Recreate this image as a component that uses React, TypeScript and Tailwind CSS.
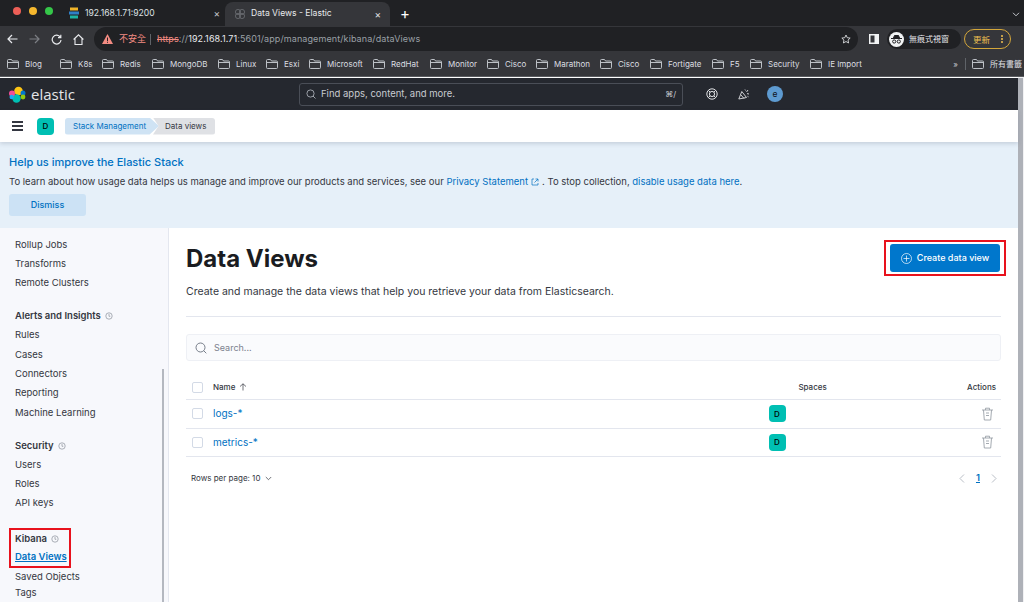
import React from "react";

const bookmarks: [string, number][] = [
  ["Blog", 53],["K8s", 42],["Redis", 50],["MongoDB", 66],["Linux", 48],["Esxi", 43],["Microsoft", 64],["RedHat", 57],["Monitor", 57],["Cisco", 49],["Marathon", 64],["Cisco", 50],["Fortigate", 62],["F5", 38],["Security", 60],["IE Import", 60],
];

function Folder() {
  return (
    <svg width="12" height="10" viewBox="0 0 12 10" fill="none" stroke="#bdc1c6" strokeWidth="1" className="shrink-0">
      <path d="M.5 8.5v-7a1 1 0 0 1 1-1h3l1 1.5h5a1 1 0 0 1 1 1v5.5a1 1 0 0 1-1 1h-9a1 1 0 0 1-1-1z" />
      <path d="M.5 3.5h11" />
    </svg>
  );
}

function Info() {
  return (
    <svg width="8" height="8" viewBox="0 0 8 8" fill="none" stroke="#8a8f99" strokeWidth=".7" className="ml-1">
      <circle cx="4" cy="4" r="3.2" />
      <path d="M4 2v2.3h1.3" />
    </svg>
  );
}

function Trash() {
  return (
    <svg width="13" height="14" viewBox="0 0 13 14" fill="none" stroke="#9aa0a8" strokeWidth=".9">
      <path d="M1 3h11M4.5 3V1.2h4V3M2.5 3l.8 10h6.4l.8-10M5 6h3M5 8.5h3" />
    </svg>
  );
}

function SpaceBadge({ className = "" }: { className?: string }) {
  return (
    <div className={`flex h-[17px] w-[17px] items-center justify-center rounded-[4px] bg-[#00bfb3] text-[8px] font-medium text-black ${className}`}>D</div>
  );
}

function Checkbox() {
  return <div className="h-[11px] w-[11px] rounded-[2px] border border-[#d3dae6] bg-white" />;
}

function SideItem({ label }: { label: string }) {
  return <div className="flex h-[19.4px] items-center text-[9.5px] text-[#343741]">{label}</div>;
}

function SideHead({ label, className = "" }: { label: string; className?: string }) {
  return (
    <div className={`flex h-[19px] items-center text-[9.5px] font-semibold text-[#343741] ${className}`}>
      {label}
      <Info />
    </div>
  );
}

export default function App() {
  return (
    <div className="flex h-[602px] w-[1024px] flex-col overflow-hidden bg-white font-['Inter',sans-serif]">
      {/* tab strip */}
      <div className="flex h-[26px] shrink-0 items-end bg-[#202124]">
        <div className="flex h-[24px] w-[65px] items-start gap-[8px] pl-[13px] pt-[5px]">
          <div className="h-[8px] w-[8px] rounded-full bg-[#ed5f57]" />
          <div className="h-[8px] w-[8px] rounded-full bg-[#f5b82e]" />
          <div className="h-[8px] w-[8px] rounded-full bg-[#35c749]" />
        </div>
        <div className="flex h-[24px] w-[160px] items-center pb-[2px] pl-[4px]">
          <svg width="10" height="12" viewBox="0 0 10 12" className="shrink-0">
            <path d="M1 0.5h8v3H1z" fill="#f0b429" />
            <path d="M0 4.5h10v3H0z" fill="#2f80c7" />
            <path d="M1 8.5h8v3H1z" fill="#1db5a5" />
          </svg>
          <span className="ml-[6px] text-[8.6px] text-[#dfe1e5]">192.168.1.71:9200</span>
          <span className="ml-auto mr-[5px] text-[10px] leading-none text-[#c4c7cc]">×</span>
        </div>
        <div className="flex h-[24px] w-[165px] items-center rounded-t-[8px] bg-[#35363a] pb-[1px] pl-[9px]">
          <svg width="12" height="12" viewBox="0 0 12 12" fill="none" stroke="#6d7075" strokeWidth=".8" className="shrink-0">
            <circle cx="4" cy="4" r="2.6" /><circle cx="8" cy="4" r="2.6" /><circle cx="4" cy="8" r="2.6" /><circle cx="8" cy="8" r="2.6" />
          </svg>
          <span className="ml-[5px] text-[8.6px] text-[#e8eaed]">Data Views - Elastic</span>
          <span className="ml-auto mr-[9px] text-[10px] leading-none text-[#e0e2e5]">×</span>
        </div>
        <div className="ml-[10px] flex h-[24px] items-center pb-[2px] text-[15px] leading-none text-white">+</div>
        <svg width="8" height="5" viewBox="0 0 8 5" fill="none" stroke="#c4c7cc" strokeWidth="1" className="ml-auto mb-[9px] mr-[4px]">
          <path d="M1 .8l3 3 3-3" />
        </svg>
      </div>
      {/* toolbar */}
      <div className="flex h-[26px] shrink-0 items-center bg-[#35363a]">
        <svg width="11" height="10" viewBox="0 0 11 10" fill="none" stroke="#e8eaed" strokeWidth="1.2" className="ml-[7px]"><path d="M10.5 5H1M5 1L1 5l4 4" /></svg>
        <svg width="11" height="10" viewBox="0 0 11 10" fill="none" stroke="#7c7f84" strokeWidth="1.2" className="ml-[11px]"><path d="M.5 5H10M6 1l4 4-4 4" /></svg>
        <svg width="11" height="11" viewBox="0 0 11 11" fill="none" stroke="#e8eaed" strokeWidth="1.2" className="ml-[11px]"><path d="M9.3 3.2A4.4 4.4 0 1 0 10 6M9.8 .8v2.8H7" /></svg>
        <svg width="11" height="11" viewBox="0 0 11 11" fill="none" stroke="#e8eaed" strokeWidth="1.1" className="ml-[11px]"><path d="M.6 5.5L5.5.8l4.9 4.7M2 4.5v6h7v-6" /></svg>
        <div className="ml-[10px] flex h-[24px] w-[764px] items-center rounded-full bg-[#202124] pl-[8px]">
          <svg width="11" height="10" viewBox="0 0 11 10" className="shrink-0"><path d="M5.5 0L11 10H0z" fill="#f28b82" /><path d="M5 3.5h1v3.4H5zM5 7.7h1v1H5z" fill="#202124" /></svg>
          <span className="ml-[6px] font-['Noto_Sans_CJK_TC','Inter',sans-serif] text-[9px] text-[#f28b82]">不安全</span>
          <div className="ml-[4px] h-[11px] w-px bg-[#5f6368]" />
          <span className="ml-[6px] text-[9px] tracking-[.1px]">
            <span className="text-[#f28b82] line-through">https</span>
            <span className="text-[#9aa0a6]">://</span>
            <span className="text-[#e8eaed]">192.168.1.71</span>
            <span className="text-[#9aa0a6]">:5601/app/management/kibana/dataViews</span>
          </span>
          <svg width="10" height="10" viewBox="0 0 24 24" fill="none" stroke="#e8eaed" strokeWidth="2" className="ml-auto mr-[7px]"><path d="M12 2.5l3 6.4 7 .9-5.100 4.800 1.300 6.900-6.200-3.400-6.200 3.400 1.300-6.900L2 9.800l7-.9z" /></svg>
        </div>
        <svg width="10" height="10" viewBox="0 0 10 10" className="ml-[11px]"><path d="M0 0h10v10H0z" fill="#f1f3f4" /><path d="M1.500 1.500h4v7h-4z" fill="#35363a" /></svg>
        <div className="ml-[8px] flex h-[20px] w-[74px] items-center rounded-full bg-[#202124] pl-[2px]">
          <div className="flex h-[15px] w-[15px] items-center justify-center rounded-full bg-[#f1f3f4]">
            <svg width="11" height="9" viewBox="0 0 11 9" fill="none" stroke="#202124" strokeWidth="1"><path d="M0 3.500h11" /><path d="M2.500 3l1-2.500h4l1 2.500z" fill="#202124" /><circle cx="3.200" cy="6.500" r="1.600" /><circle cx="7.800" cy="6.500" r="1.600" /></svg>
          </div>
          <span className="ml-[5px] font-['Noto_Sans_CJK_TC',sans-serif] text-[8px] text-[#e8eaed]">無痕式視窗</span>
        </div>
        <div className="ml-[3px] flex h-[20px] w-[47px] items-center rounded-full border border-[#d4a73a] pl-[8px]">
          <span className="font-['Noto_Sans_CJK_TC',sans-serif] text-[8.500px] text-[#f0c050]">更新</span>
          <div className="ml-auto mr-[7px] flex flex-col gap-px">
            <div className="h-[2px] w-[2px] rounded-full bg-[#f0c050]" />
            <div className="h-[2px] w-[2px] rounded-full bg-[#f0c050]" />
            <div className="h-[2px] w-[2px] rounded-full bg-[#f0c050]" />
          </div>
        </div>
      </div>
      {/* bookmarks */}
      <div className="flex h-[25px] shrink-0 items-center border-b border-[#5a5c60] bg-[#35363a] pl-[7px] pr-[2px]">
        {bookmarks.map(([name, w], i) => (
          <div key={i} style={{ width: w }} className="flex shrink-0 items-center gap-[6px] text-[8px] text-[#dcdee1]">
            <Folder />
            <span>{name}</span>
          </div>
        ))}
        <span className="ml-auto text-[8px] text-[#c4c7cc]">»</span>
        <div className="ml-[7px] mr-[6px] h-[12px] w-px bg-[#5f6368]" />
        <div className="flex items-center gap-[6px] font-['Noto_Sans_CJK_TC',sans-serif] text-[8px] text-[#dcdee1]">
          <Folder />
          <span>所有書籤</span>
        </div>
      </div>
      {/* page + page scrollbar */}
      <div className="flex min-h-0 flex-1">
        <div className="flex min-w-0 flex-1 flex-col">
          <div className="h-[1px] shrink-0 bg-white" />
          {/* elastic header */}
          <div className="flex h-[32px] shrink-0 items-center bg-[#25282f]">
            <svg width="17" height="17" viewBox="0 0 17 17" className="ml-[9px] shrink-0">
              <circle cx="9.500" cy="5" r="4.300" fill="#fec514" />
              <circle cx="7.500" cy="12.500" r="4.200" fill="#00bfb3" />
              <circle cx="3" cy="7.500" r="3" fill="#f04e98" />
              <circle cx="2.700" cy="11" r="2.200" fill="#1ba9f5" />
              <circle cx="14" cy="7" r="2.500" fill="#0077cc" />
              <circle cx="14" cy="11" r="2.400" fill="#93c90e" />
            </svg>
            <span className="ml-[5px] font-['Open_Sans',sans-serif] text-[15px] leading-none text-[#e4e5e8]">elastic</span>
            <div className="ml-[224px] flex h-[23px] w-[384px] items-center rounded-[3px] border border-[#4a4e57] bg-[#25282f] pl-[6px]">
              <svg width="10" height="10" viewBox="0 0 10 10" fill="none" stroke="#b8bcc4" strokeWidth=".8"><circle cx="4.500" cy="4.500" r="3.600" /><path d="M7 7l2.500 2.500" /></svg>
              <span className="ml-[5px] text-[9.500px] text-[#c8cbd1]">Find apps, content, and more.</span>
              <span className="ml-auto mr-[6px] text-[8px] text-[#c8cbd1]">⌘/</span>
            </div>
            <svg width="12" height="12" viewBox="0 0 12 12" fill="none" stroke="#dfe0e3" strokeWidth="1" className="ml-[23px]">
              <circle cx="6" cy="6" r="5.200" /><circle cx="6" cy="6" r="2.600" /><path d="M2.300 2.300l1.900 1.900M9.700 2.300L7.800 4.200M2.300 9.700l1.900-1.900M9.700 9.700L7.800 7.800" />
            </svg>
            <svg width="12" height="12" viewBox="0 0 12 12" fill="none" stroke="#dfe0e3" strokeWidth=".9" className="ml-[20px]">
              <path d="M.8 11l3-7.500 4.700 6zM3 7l3 3.500M7 1.500l.6 1M10 2L8.500 4M11 6l-2-.4M9.500 8.300l1 .5" />
            </svg>
            <div className="ml-[17px] flex h-[16px] w-[16px] items-center justify-center rounded-full bg-[#5e9bd1] text-[8.500px] text-[#10141a]">e</div>
            <div className="flex-1" />
          </div>
          {/* breadcrumbs */}
          <div className="z-10 flex h-[32px] shrink-0 items-center bg-white shadow-[0_2px_4px_rgba(60,70,100,0.18)]">
            <div className="ml-[12px] flex flex-col gap-[2.500px]">
              <div className="h-[1.400px] w-[11px] bg-[#343741]" />
              <div className="h-[1.400px] w-[11px] bg-[#343741]" />
              <div className="h-[1.400px] w-[11px] bg-[#343741]" />
            </div>
            <SpaceBadge className="ml-[14px]" />
            <div className="ml-[11px] flex h-[17px] items-center">
              <div className="flex h-full w-[94px] items-center rounded-l-[3px] bg-[#cfe3f4] pl-[8px] text-[8px] text-[#0071c2] [clip-path:polygon(0_0,90%_0,100%_50%,90%_100%,0_100%)]">Stack Management</div>
              <div className="-ml-[6px] flex h-full w-[62px] items-center rounded-r-[3px] bg-[#dfe1e5] pl-[12px] text-[8px] text-[#343741] [clip-path:polygon(0_0,100%_0,100%_100%,0_100%,9%_50%)]">Data views</div>
            </div>
          </div>
          {/* banner */}
          <div className="flex h-[86px] shrink-0 flex-col bg-[#e6f0f9] pl-[9px]">
            <div className="mt-[13px] text-[11px] font-medium leading-[14px] text-[#0071c2]">Help us improve the Elastic Stack</div>
            <div className="mt-[7px] flex items-center text-[9.500px] leading-[12px] text-[#343741]">
              <span>To learn about how usage data helps us manage and improve our products and services, see our&nbsp;</span>
              <span className="text-[#0071c2]">Privacy Statement</span>
              <svg width="8" height="8" viewBox="0 0 8 8" fill="none" stroke="#0071c2" strokeWidth=".7" className="mx-[3px]"><path d="M3 1H1v6h6V5M4.500 1H7v2.500M7 1L3.500 4.500" /></svg>
              <span>. To stop collection,&nbsp;</span>
              <span className="text-[#0071c2]">disable usage data here</span>
              <span>.</span>
            </div>
            <div className="mt-[6px] flex h-[22px] w-[77px] items-center justify-center rounded-[3px] bg-[#cce2f5] text-[9px] font-medium text-[#0071c2]">Dismiss</div>
          </div>
          {/* body */}
          <div className="flex min-h-0 flex-1">
            <aside className="relative flex w-[169px] shrink-0 flex-col overflow-hidden border-r border-[#e4e7ef] bg-[#f7f8fc] pl-[15px]">
              <div className="mt-[7px] flex flex-col">
                <SideItem label="Rollup Jobs" />
                <SideItem label="Transforms" />
                <SideItem label="Remote Clusters" />
              </div>
              <SideHead label="Alerts and Insights" className="mt-[15px]" />
              <div className="mt-[1px] flex flex-col">
                <SideItem label="Rules" />
                <SideItem label="Cases" />
                <SideItem label="Connectors" />
                <SideItem label="Reporting" />
                <SideItem label="Machine Learning" />
              </div>
              <SideHead label="Security" className="mt-[15px]" />
              <div className="mt-[1px] flex flex-col">
                <SideItem label="Users" />
                <SideItem label="Roles" />
                <SideItem label="API keys" />
              </div>
              <div className="-ml-[6px] mt-[15px] w-[62px] border-2 border-[#e8121d] pl-[4px]">
                <SideHead label="Kibana" className="-mt-[1px]" />
                <div className="flex h-[18px] items-center text-[9.500px] font-semibold text-[#0071c2] underline">Data Views</div>
              </div>
              <SideItem label="Saved Objects" />
              <SideItem label="Tags" />
              <div className="absolute right-[4px] top-[141px] h-[300px] w-[2px] bg-[#b4b8c0]" />
            </aside>
            <main className="flex min-w-0 flex-1 flex-col px-[17px]">
              <div className="flex items-start justify-between">
                <h1 className="mt-[17px] text-[24px] font-bold leading-[28px] text-[#1a1c21]">Data Views</h1>
                <div className="-mr-[5px] mt-[12px] flex h-[36px] w-[122px] items-center justify-center border-2 border-[#e8121d]">
                  <div className="flex h-[28px] w-[110px] items-center justify-center rounded-[3px] bg-[#0077cc] text-white">
                    <svg width="11" height="11" viewBox="0 0 11 11" fill="none" stroke="#fff" strokeWidth=".7"><circle cx="5.500" cy="5.500" r="5" /><path d="M5.500 2.500v6M2.500 5.500h6" /></svg>
                    <span className="ml-[5px] text-[9px] font-medium">Create data view</span>
                  </div>
                </div>
              </div>
              <p className="mt-[9px] text-[10.500px] leading-[14px] text-[#343741]">Create and manage the data views that help you retrieve your data from Elasticsearch.</p>
              <div className="mt-[17px] h-px bg-[#e3e6ee]" />
              <div className="mt-[17px] flex h-[27px] items-center rounded-[3px] border border-[#eef0f5] bg-[#fafbfd] pl-[8px]">
                <svg width="12" height="12" viewBox="0 0 12 12" fill="none" stroke="#69707d" strokeWidth=".9"><circle cx="5.500" cy="5.500" r="4.500" /><path d="M8.700 8.700l2.600 2.600" /></svg>
                <span className="ml-[7px] text-[9px] text-[#7c828e]">Search...</span>
              </div>
              <div className="mt-[14px] flex h-[25px] items-center border-b border-[#e3e6ee] pl-[6px] pr-[5px]">
                <Checkbox />
                <span className="ml-[10px] text-[8px] font-medium text-[#343741]">Name</span>
                <svg width="8" height="8" viewBox="0 0 8 8" fill="none" stroke="#343741" strokeWidth=".7" className="ml-[4px]"><path d="M4 7.500V.8M1 3.500L4 .8l3 2.700" /></svg>
                <span className="ml-[551px] text-[8px] font-medium text-[#343741]">Spaces</span>
                <span className="ml-auto text-[8px] font-medium text-[#343741]">Actions</span>
              </div>
              {["logs-*", "metrics-*"].map((name) => (
                <div key={name} className="flex h-[28.500px] items-center border-b border-[#e3e6ee] pl-[6px] pr-[7px]">
                  <Checkbox />
                  <span className="ml-[10px] w-[555.500px] text-[10px] text-[#0071c2]">{name}</span>
                  <SpaceBadge />
                  <div className="ml-auto"><Trash /></div>
                </div>
              ))}
              <div className="mt-[14px] flex items-center pl-[5px] pr-[4px]">
                <span className="text-[8px] text-[#343741]">Rows per page: 10</span>
                <svg width="7" height="5" viewBox="0 0 7 5" fill="none" stroke="#343741" strokeWidth=".7" className="ml-[5px]"><path d="M.8 1l2.700 2.700L6.200 1" /></svg>
                <svg width="6" height="9" viewBox="0 0 6 9" fill="none" stroke="#a7adb8" strokeWidth=".8" className="ml-auto"><path d="M5 .5l-4 4 4 4" /></svg>
                <span className="ml-[11px] text-[9.500px] font-semibold text-[#0071c2] underline">1</span>
                <svg width="6" height="9" viewBox="0 0 6 9" fill="none" stroke="#a7adb8" strokeWidth=".8" className="ml-[11px]"><path d="M1 .5l4 4-4 4" /></svg>
              </div>
            </main>
          </div>
        </div>
        <div className="flex w-[6px] shrink-0 flex-col bg-[#f1f1f3] pt-[1px]">
          <div className="h-full w-[5px] bg-[#aeb1b8]" />
        </div>
      </div>
    </div>
  );
}
